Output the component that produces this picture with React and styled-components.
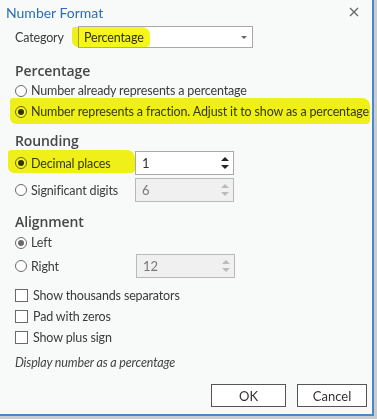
import React, { useState } from "react";
import styled, { createGlobalStyle } from "styled-components";

const GlobalStyle = createGlobalStyle`
	html, body {
		margin: 0;
		padding: 0;
		background: #c9cdd1;
	}
	body {
		font-family: Lato, "Segoe UI", sans-serif;
		font-size: 12.5px;
		letter-spacing: -0.15px;
		color: #3b3b3b;
	}
`;

const Dialog = styled.div`
	width: 374px;
	height: 416px;
	box-sizing: border-box;
	background: #f8f9f9;
	border-right: 2px solid #4a88c7;
	border-bottom: 2px solid #4a88c7;
	display: flex;
	flex-direction: column;
	overflow: hidden;
`;

const TitleBar = styled.div`
	display: flex;
	align-items: center;
	justify-content: space-between;
	height: 24px;
	padding: 0 12px 0 6px;
`;

const Title = styled.div`
	color: #2a6fb4;
	font-size: 14px;
	letter-spacing: 0;
`;

const Close = styled.button`
	border: none;
	background: none;
	padding: 0;
	width: 12px;
	height: 12px;
	display: flex;
	align-items: center;
	justify-content: center;
`;

const Body = styled.div`
	flex: 1;
	display: flex;
	flex-direction: column;
	padding: 2px 0 0 15px;
`;

const Row = styled.div`
	position: relative;
	display: flex;
	align-items: center;
	height: ${(p) => p.h || 21}px;
	margin-top: ${(p) => p.mt || 0}px;
`;

const Mark = styled.span`
	position: absolute;
	left: ${(p) => p.l}px;
	width: ${(p) => p.w}px;
	top: ${(p) => p.t}px;
	height: ${(p) => p.hh}px;
	background: #f6f61a;
	mix-blend-mode: multiply;
	border-radius: 3px 8px 4px 6px;
	pointer-events: none;
`;

const Label = styled.span`
	width: ${(p) => p.w || "auto"};
	flex-shrink: 0;
	white-space: nowrap;
`;

const Heading = styled.div`
	font-family: "Open Sans", Lato, sans-serif;
	font-size: 14px;
	font-weight: 600;
	letter-spacing: -0.1px;
	color: #474747;
	height: 22px;
	display: flex;
	align-items: center;
	margin-top: ${(p) => p.mt || 0}px;
`;

const Select = styled.div`
	width: 175px;
	height: 22px;
	box-sizing: border-box;
	border: 1px solid #a9a9a9;
	background: #fff;
	display: flex;
	align-items: center;
	justify-content: space-between;
	padding: 0 5px 0 5px;
	color: #333;
`;

const Caret = styled.span`
	width: 0;
	height: 0;
	border-left: 3px solid transparent;
	border-right: 3px solid transparent;
	border-top: 3px solid #666;
`;

const Spin = styled.div`
	width: 99px;
	height: 24px;
	box-sizing: border-box;
	border: 1px solid ${(p) => (p.disabled ? "#b9b9b9" : "#a9a9a9")};
	background: ${(p) => (p.disabled ? "#f0f0f0" : "#fff")};
	color: ${(p) => (p.disabled ? "#777" : "#333")};
	display: flex;
	align-items: center;
	justify-content: space-between;
	padding: 0 4px 0 6px;
	margin-left: ${(p) => p.ml || 0}px;
	font-size: 13px;
`;

const Arrows = styled.div`
	display: flex;
	flex-direction: column;
	gap: 4px;
	span {
		width: 0;
		height: 0;
		border-left: 4px solid transparent;
		border-right: 4px solid transparent;
	}
	span:first-child {
		border-bottom: 4px solid ${(p) => (p.disabled ? "#bbb" : "#222")};
	}
	span:last-child {
		border-top: 4px solid ${(p) => (p.disabled ? "#bbb" : "#222")};
	}
`;

const RadioDot = styled.span`
	position: relative;
	width: 12px;
	height: 12px;
	box-sizing: border-box;
	border-radius: 50%;
	border: 1px solid #6a6a6a;
	background: #fff;
	margin-right: 4px;
	flex-shrink: 0;
	&::after {
		content: "";
		display: ${(p) => (p.on ? "block" : "none")};
		position: absolute;
		left: 2px;
		top: 2px;
		width: 6px;
		height: 6px;
		border-radius: 50%;
		background: ${(p) => p.dot || "#333"};
	}
`;

const Box = styled.span`
	width: 13px;
	height: 13px;
	box-sizing: border-box;
	border: 1px solid #6a6a6a;
	background: #fff;
	margin-right: 5px;
	flex-shrink: 0;
`;

const Hint = styled.div`
	font-style: italic;
	color: #444;
	height: 20px;
	display: flex;
	align-items: center;
	margin-top: 4px;
`;

const Footer = styled.div`
	display: flex;
	justify-content: flex-end;
	gap: 11px;
	padding: 0 5px 7px 0;
`;

const Button = styled.button`
	width: ${(p) => p.w}px;
	height: 23px;
	box-sizing: border-box;
	border: 1px solid #555;
	background: #fff;
	font-family: inherit;
	font-size: 13px;
	color: #333;
	padding: 0;
`;

const Radio = ({ on, dot, children, w }) => (
	<>
		<RadioDot on={on} dot={dot} />
		<Label w={w}>{children}</Label>
	</>
);

const NumberBox = ({ value, disabled, ml }) => (
	<Spin disabled={disabled} ml={ml}>
		<span>{value}</span>
		<Arrows disabled={disabled}>
			<span />
			<span />
		</Arrows>
	</Spin>
);

export default function App() {
	const [decimals] = useState("1");

	return (
		<>
			<GlobalStyle />
			<Dialog>
				<TitleBar>
					<Title>Number Format</Title>
					<Close aria-label="Close">
						<svg width="10" height="10" viewBox="0 0 10 10">
							<path d="M1 1 L9 9 M9 1 L1 9" stroke="#666" strokeWidth="1.3" fill="none" />
						</svg>
					</Close>
				</TitleBar>
				<Body>
					<Row h={22}>
						<Label w="63px">Category</Label>
						<Select>
							<span>Percentage</span>
							<Caret />
						</Select>
						<Mark l={57} w={78} t={1} hh={20} />
					</Row>

					<Heading mt={11}>Percentage</Heading>
					<Row mt={-1}>
						<Radio>Number already represents a percentage</Radio>
					</Row>
					<Row>
						<Radio on>Number represents a fraction. Adjust it to show as a percentage</Radio>
						<Mark l={-5} w={360} t={-3} hh={26} />
					</Row>

					<Heading mt={7}>Rounding</Heading>
					<Row h={24}>
						<Radio on w="104px">Decimal places</Radio>
						<NumberBox value={decimals} />
						<Mark l={-7} w={127} t={-1} hh={23} />
					</Row>
					<Row h={24} mt={3}>
						<Radio w="104px">Significant digits</Radio>
						<NumberBox value="6" disabled />
					</Row>

					<Heading mt={8}>Alignment</Heading>
					<Row>
						<Radio on dot="#6b6b6b">Left</Radio>
					</Row>
					<Row h={24} mt={1}>
						<Radio w="104px">Right</Radio>
						<NumberBox value="12" disabled ml={1} />
					</Row>

					<Row mt={7}>
						<Box />
						<Label>Show thousands separators</Label>
					</Row>
					<Row>
						<Box />
						<Label>Pad with zeros</Label>
					</Row>
					<Row>
						<Box />
						<Label>Show plus sign</Label>
					</Row>

					<Hint>Display number as a percentage</Hint>
				</Body>
				<Footer>
					<Button w={75}>OK</Button>
					<Button w={70}>Cancel</Button>
				</Footer>
			</Dialog>
		</>
	);
}
